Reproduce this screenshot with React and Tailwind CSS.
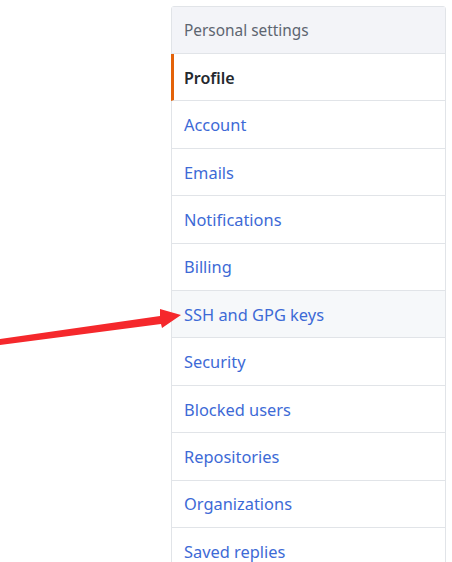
import React from "react";

const items = [
  "Account",
  "Emails",
  "Notifications",
  "Billing",
  "SSH and GPG keys",
  "Security",
  "Blocked users",
  "Repositories",
  "Organizations",
  "Saved replies",
];

export default function App() {
  return (
    <div
      className="relative w-[452px] h-[562px] overflow-hidden bg-white"
      style={{ fontFamily: '"Noto Sans", "Liberation Sans", sans-serif' }}
    >
      <div className="ml-[171px] mt-[6px] w-[275px] border border-[#e1e4e8] rounded-t-[3px]">
        {/* Header */}
        <div className="h-[47px] flex items-center px-3 pt-[2px] bg-[#f3f4f8] text-[15.4px] text-[#5d6570] border-b border-[#e1e4e8]">
          Personal settings
        </div>

        {/* Active item */}
        <div className="h-[47.4px] flex items-center pl-[9px] pr-3 pt-[2px] border-l-[3px] border-l-[#e36209] -ml-px border-b border-b-[#e1e4e8] text-[16px] font-semibold text-[#24292e]">
          <span className="pl-px">Profile</span>
        </div>

        {items.map((label) => (
          <div
            key={label}
            className={
              label === "SSH and GPG keys"
                ? "h-[47.4px] flex items-center px-3 pt-[2px] border-b border-[#e1e4e8] text-[16.4px] text-[#3d6ad6] bg-[#f6f8fa]"
                : "h-[47.4px] flex items-center px-3 pt-[2px] border-b border-[#e1e4e8] text-[16.4px] text-[#3d6ad6]"
            }
          >
            {label}
          </div>
        ))}
      </div>

      {/* Arrow */}
      <svg
        className="absolute left-0 top-0"
        width="452"
        height="562"
        viewBox="0 0 452 562"
      >
        <polygon
          points="0,339 160,316 160,309 181,315 162,328 161,324 0,345"
          fill="#f5282c"
        />
      </svg>
    </div>
  );
}
